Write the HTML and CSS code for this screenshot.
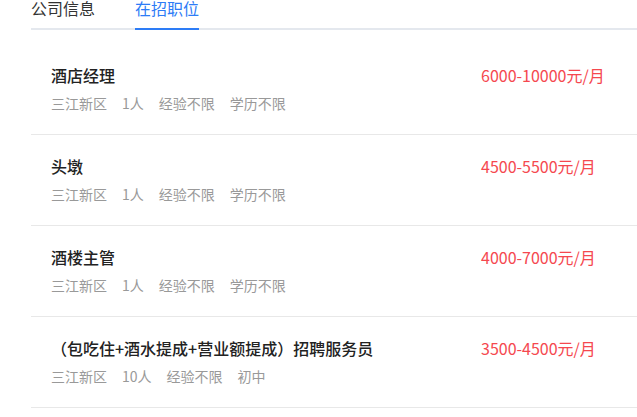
FILE: index.html
```html
<!DOCTYPE html>
<html lang="zh-CN">
<head>
<meta charset="UTF-8">
<meta name="viewport" content="width=device-width, initial-scale=1.0">
<title>在招职位</title>
<link rel="stylesheet" href="styles.css">
</head>
<body>

<div class="company-panel">
    <div class="tabs">
        <div class="tab">公司信息</div>
        <div class="tab active">在招职位</div>
    </div>

    <ul class="job-list">
        <li class="job-item">
            <div class="job-info">
                <div class="job-name">酒店经理</div>
                <div class="job-meta">
                    <span>三江新区</span>
                    <span>1人</span>
                    <span>经验不限</span>
                    <span>学历不限</span>
                </div>
            </div>
            <div class="job-salary">6000-10000元/月</div>
        </li>
        <li class="job-item">
            <div class="job-info">
                <div class="job-name">头墩</div>
                <div class="job-meta">
                    <span>三江新区</span>
                    <span>1人</span>
                    <span>经验不限</span>
                    <span>学历不限</span>
                </div>
            </div>
            <div class="job-salary">4500-5500元/月</div>
        </li>
        <li class="job-item">
            <div class="job-info">
                <div class="job-name">酒楼主管</div>
                <div class="job-meta">
                    <span>三江新区</span>
                    <span>1人</span>
                    <span>经验不限</span>
                    <span>学历不限</span>
                </div>
            </div>
            <div class="job-salary">4000-7000元/月</div>
        </li>
        <li class="job-item">
            <div class="job-info">
                <div class="job-name">（包吃住+酒水提成+营业额提成）招聘服务员</div>
                <div class="job-meta">
                    <span>三江新区</span>
                    <span>10人</span>
                    <span>经验不限</span>
                    <span>初中</span>
                </div>
            </div>
            <div class="job-salary">3500-4500元/月</div>
        </li>
    </ul>
</div>

</body>
</html>
```

FILE: styles.css
```css
* {
    margin: 0;
    padding: 0;
    box-sizing: border-box;
    font-family: "Noto Sans CJK SC", "Noto Sans", sans-serif;
}
body {
    background: #fff;
    color: #222;
    overflow: hidden;
}
.company-panel {
    margin-left: 31px;
}
.tabs {
    display: flex;
    gap: 40px;
    margin-top: -3px;
    border-bottom: 2px solid #e4e8ee;
}
.tab {
    font-size: 16px;
    line-height: 22px;
    padding-bottom: 9px;
    color: #333;
    margin-bottom: -2px;
    border-bottom: 2px solid transparent;
}
.tab.active {
    color: #2d7cf6;
    border-bottom-color: #2d7cf6;
}
.job-list {
    list-style: none;
    margin-top: 14px;
}
.job-item {
    display: grid;
    grid-template-columns: 1fr 156px;
    padding: 19px 0 21px 20px;
    border-bottom: 1px solid #e8e8e8;
}
.job-name {
    font-size: 16px;
    line-height: 24px;
    font-weight: 500;
    color: #222;
}
.job-meta {
    display: flex;
    gap: 15px;
    margin-top: 6px;
    font-size: 14px;
    line-height: 20px;
    color: #999;
}
.job-salary {
    font-size: 16px;
    line-height: 24px;
    color: #f5484f;
}
```
